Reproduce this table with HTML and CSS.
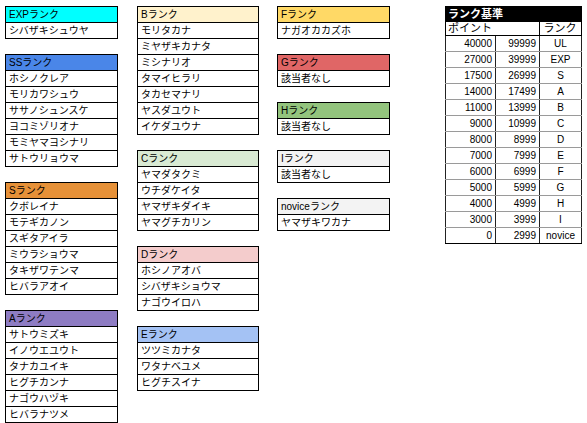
FILE: index.html
```html
<!DOCTYPE html>
<html lang="ja">
<head>
<meta charset="utf-8">
<title>ランク</title>
<link rel="stylesheet" href="styles.css">
</head>
<body>
<div class="sheet">
  <div class="col col-1">
    <div class="box">
      <div class="hd exp">EXPランク</div>
      <div class="cell">シバザキシュウヤ</div>
    </div>
    <div class="box">
      <div class="hd ss">SSランク</div>
      <div class="cell">ホシノクレア</div>
      <div class="cell">モリカワシュウ</div>
      <div class="cell">ササノシュンスケ</div>
      <div class="cell">ヨコミゾリオナ</div>
      <div class="cell">モミヤマヨシナリ</div>
      <div class="cell">サトウリョウマ</div>
    </div>
    <div class="box">
      <div class="hd s">Sランク</div>
      <div class="cell">クボレイナ</div>
      <div class="cell">モテギカノン</div>
      <div class="cell">スギタアイラ</div>
      <div class="cell">ミウラショウマ</div>
      <div class="cell">タキザワテンマ</div>
      <div class="cell">ヒバラアオイ</div>
    </div>
    <div class="box">
      <div class="hd a">Aランク</div>
      <div class="cell">サトウミズキ</div>
      <div class="cell">イノウエユウト</div>
      <div class="cell">タナカユイキ</div>
      <div class="cell">ヒグチカンナ</div>
      <div class="cell">ナゴウハヅキ</div>
      <div class="cell">ヒバラナツメ</div>
    </div>
  </div>
  <div class="col col-2">
    <div class="box">
      <div class="hd b">Bランク</div>
      <div class="cell">モリタカナ</div>
      <div class="cell">ミヤザキカナタ</div>
      <div class="cell">ミシナリオ</div>
      <div class="cell">タマイヒラリ</div>
      <div class="cell">タカセマナリ</div>
      <div class="cell">ヤスダユウト</div>
      <div class="cell">イケダユウナ</div>
    </div>
    <div class="box">
      <div class="hd c">Cランク</div>
      <div class="cell">ヤマダタクミ</div>
      <div class="cell">ウチダケイタ</div>
      <div class="cell">ヤマザキダイキ</div>
      <div class="cell">ヤマグチカリン</div>
    </div>
    <div class="box">
      <div class="hd d">Dランク</div>
      <div class="cell">ホシノアオバ</div>
      <div class="cell">シバザキショウマ</div>
      <div class="cell">ナゴウイロハ</div>
    </div>
    <div class="box">
      <div class="hd e">Eランク</div>
      <div class="cell">ツツミカナタ</div>
      <div class="cell">ワタナベユメ</div>
      <div class="cell">ヒグチスイナ</div>
    </div>
  </div>
  <div class="col col-3">
    <div class="box">
      <div class="hd f">Fランク</div>
      <div class="cell">ナガオカカズホ</div>
    </div>
    <div class="box">
      <div class="hd g">Gランク</div>
      <div class="cell">該当者なし</div>
    </div>
    <div class="box">
      <div class="hd h">Hランク</div>
      <div class="cell">該当者なし</div>
    </div>
    <div class="box">
      <div class="hd i">Iランク</div>
      <div class="cell">該当者なし</div>
    </div>
    <div class="box">
      <div class="hd i">noviceランク</div>
      <div class="cell">ヤマザキワカナ</div>
    </div>
  </div>
  <table class="criteria">
    <colgroup><col class="c1"><col class="c2"><col class="c3"></colgroup>
    <thead>
      <tr><th colspan="3" class="title">ランク基準</th></tr>
      <tr><th colspan="2" class="sub">ポイント</th><th class="sub rk">ランク</th></tr>
    </thead>
    <tbody>
      <tr><td>40000</td><td>99999</td><td>UL</td></tr>
      <tr><td>27000</td><td>39999</td><td>EXP</td></tr>
      <tr><td>17500</td><td>26999</td><td>S</td></tr>
      <tr><td>14000</td><td>17499</td><td>A</td></tr>
      <tr><td>11000</td><td>13999</td><td>B</td></tr>
      <tr><td>9000</td><td>10999</td><td>C</td></tr>
      <tr><td>8000</td><td>8999</td><td>D</td></tr>
      <tr><td>7000</td><td>7999</td><td>E</td></tr>
      <tr><td>6000</td><td>6999</td><td>F</td></tr>
      <tr><td>5000</td><td>5999</td><td>G</td></tr>
      <tr><td>4000</td><td>4999</td><td>H</td></tr>
      <tr><td>3000</td><td>3999</td><td>I</td></tr>
      <tr><td>0</td><td>2999</td><td>novice</td></tr>
    </tbody>
  </table>
</div>
</body>
</html>
```

FILE: styles.css
```css
html, body {
  margin: 0;
  padding: 0;
  background: #ffffff;
}
body {
  font-family: "Liberation Sans", "Noto Sans CJK JP", sans-serif;
  font-size: 10px;
  color: #000;
}
.sheet {
  display: flex;
  align-items: flex-start;
  padding: 6px 0 0 5px;
}
.col {
  display: flex;
  flex-direction: column;
  gap: 15px;
}
.col-1 { width: 113px; }
.col-2 { width: 122px; margin-left: 19px; }
.col-3 { width: 113px; margin-left: 18px; }
.box {
  border: 1px solid #000;
  display: flex;
  flex-direction: column;
}
.hd, .cell {
  height: 15px;
  line-height: 15px;
  padding-left: 3px;
  white-space: nowrap;
  overflow: hidden;
}
.cell { border-top: 1px solid #000; }
.exp { background: #00ffff; }
.ss { background: #4a86e8; }
.s { background: #e69138; }
.a { background: #8e7cc3; }
.b { background: #fff2cc; }
.c { background: #d9ead3; }
.d { background: #f4cccc; }
.e { background: #a4c2f4; }
.f { background: #ffd966; }
.g { background: #e06666; }
.h { background: #93c47d; }
.i { background: #f3f3f3; }

.criteria {
  margin-left: 55px;
  border-collapse: collapse;
  table-layout: fixed;
  width: 136px;
  border: 1px solid #000;
}
.criteria .c1 { width: 50px; }
.criteria .c2 { width: 44px; }
.criteria .c3 { width: 42px; }
.criteria th, .criteria td {
  height: 15px;
  line-height: 15px;
  padding: 0 3px;
  font-weight: normal;
  white-space: nowrap;
}
.criteria .title {
  background: #000;
  color: #fff;
  font-weight: bold;
  text-align: left;
  font-size: 11px;
  padding-left: 2px;
  height: 14px;
  line-height: 14px;
}
.criteria .sub {
  text-align: left;
  border: 1px solid #000;
  padding-left: 2px;
  font-size: 11px;
  height: 13px;
  line-height: 13px;
}
.criteria .sub.rk { text-align: center; }
.criteria td {
  text-align: right;
  border-left: 1px solid #222;
  border-right: 1px solid #222;
  border-top: 1px solid #9a9a9a;
  border-bottom: 1px solid #9a9a9a;
}
.criteria td:last-child { text-align: center; }
.criteria tbody tr:last-child td { border-bottom: 1px solid #000; }
```
